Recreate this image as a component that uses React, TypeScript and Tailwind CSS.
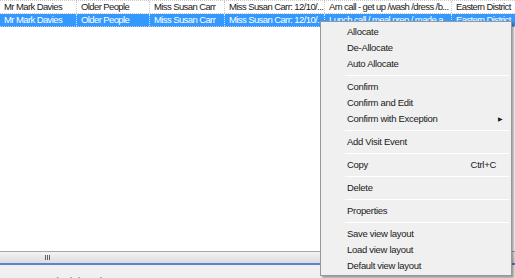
import React from "react";

const cols = [77, 73, 75, 100, 127, 80];

const row1 = ["Mr Mark Davies", "Older People", "Miss Susan Carr", "Miss Susan Carr: 12/10/...", "Am call - get up /wash /dress /b...", "Eastern District"];
const row2 = ["Mr Mark Davies", "Older People", "Miss Susan Carr", "Miss Susan Carr: 12/10/...", "Lunch call / meal prep / made a...", "Eastern District"];

type Item = { label: string; shortcut?: string; sub?: boolean } | "sep";

const items: Item[] = [
  { label: "Allocate" },
  { label: "De-Allocate" },
  { label: "Auto Allocate" },
  "sep",
  { label: "Confirm" },
  { label: "Confirm and Edit" },
  { label: "Confirm with Exception", sub: true },
  "sep",
  { label: "Add Visit Event" },
  "sep",
  { label: "Copy", shortcut: "Ctrl+C" },
  "sep",
  { label: "Delete" },
  "sep",
  { label: "Properties" },
  "sep",
  { label: "Save view layout" },
  { label: "Load view layout" },
  { label: "Default view layout" },
];

const Row = ({ cells, selected }: { cells: string[]; selected?: boolean }) => (
  <div className={`flex h-[13px] ${selected ? "bg-[#3399ff] text-white" : "text-[#1a1a1a]"} border-b border-dotted border-[#c8c8c8]`}>
    {cells.map((c, i) => (
      <div
        key={i}
        style={{ width: cols[i] }}
        className={`shrink-0 overflow-hidden whitespace-nowrap pl-[4px] leading-[12px] border-r border-dotted ${selected ? "border-[#cfe3ff]" : "border-[#c8c8c8]"}`}
      >
        {c}
      </div>
    ))}
  </div>
);

export default function App() {
  return (
    <div className="relative w-[515px] h-[278px] overflow-hidden bg-[#f0f0f0] text-[9.5px] tracking-[-0.6px] font-['Liberation_Sans',sans-serif]">
      <div className="flex flex-col h-full">
        <div className="shrink-0 bg-white h-[251px] border-t border-dotted border-[#c8c8c8]">
          <Row cells={row1} />
          <Row cells={row2} selected />
        </div>
        <div className="shrink-0 h-[12px] border-t border-[#a8a8a8] bg-gradient-to-b from-[#f4f4f4] to-[#dcdcdc] flex items-center">
          <div className="w-[95px] h-full flex items-center justify-center gap-[1px]">
            <div className="w-[1px] h-[5px] bg-[#606060]" />
            <div className="w-[1px] h-[5px] bg-[#606060]" />
            <div className="w-[1px] h-[5px] bg-[#606060]" />
          </div>
        </div>
        <div className="shrink-0 h-[2px] bg-[#5b86cf]" />
        <div className="shrink-0 h-[13px] pl-[4px] pt-[9px] text-[#505050] tracking-normal whitespace-nowrap">1 · 7316 1 · (17/2/2011)</div>
      </div>

      <div className="absolute left-[320px] top-[21px] w-[192px] h-[255px] bg-[#f0f0f0] border border-[#979797] shadow-[2px_2px_2px_rgba(0,0,0,0.35)] py-[2px] px-[2px] text-[#1a1a1a] tracking-[-0.3px]">
        {items.map((it, i) =>
          it === "sep" ? (
            <div key={i} className="h-[7px] flex items-center pl-[22px]">
              <div className="w-full h-[1px] bg-[#d7d7d7] border-b border-white" />
            </div>
          ) : (
            <div key={i} className="h-[16px] flex items-center pl-[24px] pr-[6px]">
              <span className="flex-1">{it.label}</span>
              {it.shortcut && <span className="mr-[7px]">{it.shortcut}</span>}
              {it.sub && <span className="text-[6px]">▶</span>}
            </div>
          )
        )}
      </div>
    </div>
  );
}
